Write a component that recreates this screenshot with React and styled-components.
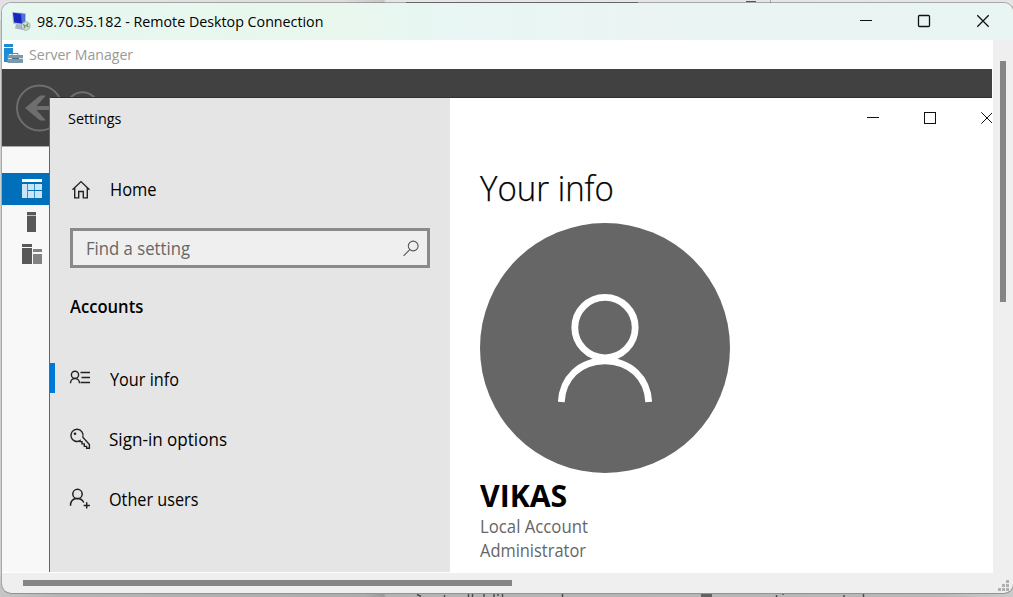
import React from "react";
import styled, { createGlobalStyle } from "styled-components";

const Global = createGlobalStyle`
  * { box-sizing: border-box; }
  html, body { margin: 0; overflow: hidden; }
  body { font-family: "Open Sans", "Noto Sans", sans-serif; color: #000; }
  svg { display: block; flex: none; overflow: visible; }
`;

const Desktop = styled.main`
  position: relative;
  width: 1013px;
  height: 597px;
  overflow: hidden;
  display: flex;
  flex-direction: column;
  justify-content: space-between;
  background: #d0d0d0;
`;
const BackdropTop = styled.div`
  height: 20px;
  background: linear-gradient(90deg, #e2e2e2 0, #dedede 340px, #c8c8c8 384px, #e5e5e5 386px);
`;
const BackdropBottom = styled.div`
  height: 20px;
  background: linear-gradient(90deg, #c6c6c6 0, #b4b4b4 60px, #adadad 365px, #999 384px, #b3b3b3 386px, #b8b8b8 940px, #cbcbcb);
`;
const RemoteWindow = styled.section`
  position: absolute;
  left: 1px;
  top: 2px;
  width: 1013px;
  height: 592px;
  display: flex;
  flex-direction: column;
  border: 1px solid #a5a9a8;
  border-top-color: rgba(70, 80, 78, 0.4);
  border-bottom-color: #939393;
  border-radius: 10px;
  overflow: hidden;
  background: #efefef;
  background-clip: padding-box;
`;
const TitleBar = styled.header`
  height: 37px;
  flex: none;
  display: flex;
  align-items: center;
  gap: 6px;
  padding: 0 24px 2px 9px;
  background: linear-gradient(90deg, #e6f7f1 0, #e9f7ed 330px, #e8f6f4 440px, #ebf4f3 650px, #e8f5f2);
`;
const Text = styled.span`
  display: block;
  white-space: nowrap;
  font-size: ${(p) => p.$size || 18.75}px;
  line-height: ${(p) => p.$line || 24}px;
  font-weight: ${(p) => p.$weight || 400};
  color: ${(p) => p.$color || "#000"};
  transform: scaleX(${(p) => p.$stretch || 0.93});
  transform-origin: 0 50%;
`;
const WindowControls = styled.div`
  margin-left: auto;
  display: flex;
  align-items: center;
  gap: ${(p) => p.$gap}px;
`;
const Body = styled.div`
  display: flex;
  height: 533px;
  flex: none;
`;
const Viewport = styled.div`
  position: relative;
  width: 991px;
  height: 533px;
  overflow: hidden;
  background: #fff;
  border: solid #fff;
  border-width: 0 1px 1px 0;
`;
const ServerTitle = styled.div`
  height: 29px;
  display: flex;
  align-items: center;
  padding: 0 0 1px 2px;
  gap: 5px;
`;
const ServerHeader = styled.div`
  height: 78px;
  background: #414141;
  border-bottom: 1px solid #aaa;
  padding: 15px 0 0 14px;
`;
const ServerRail = styled.nav`
  width: 48px;
  height: 426px;
  padding-top: 26px;
  background: #f8f8f8;
`;
const RailItem = styled.div`
  height: 32px;
  padding: 6px 0 0 20px;
  background: ${(p) => (p.$active ? "#0070bb" : "transparent")};
`;
const SettingsWindow = styled.section`
  position: absolute;
  left: 47px;
  top: 57px;
  width: 960px;
  height: 500px;
  display: flex;
  border-left: 1px solid #656565;
  border-top: 1px solid #303030;
`;
const Sidebar = styled.aside`
  width: 400px;
  background: #e5e5e5;
`;
const SettingsTitle = styled.div`
  height: 40px;
  display: flex;
  align-items: center;
  padding-left: 18px;
`;
const NavItem = styled.div`
  height: 60px;
  display: flex;
  align-items: center;
  gap: ${(p) => p.$gap || 19}px;
  padding-left: ${(p) => (p.$active ? 15 : 20)}px;
  margin-top: ${(p) => p.$top || 0}px;
`;
const ActiveMark = styled.i`
  width: 5px;
  height: 30px;
  flex: none;
  margin: -3px 0 0 -15px;
  background: #0078d7;
`;
const IconSlot = styled.div`
  width: 21px;
  height: 22px;
  flex: none;
  margin-left: ${(p) => (p.$active ? -4 : 0)}px;
`;
const SearchBox = styled.div`
  width: 360px;
  height: 40px;
  margin: 9px 0 0 20px;
  padding: 0 7px 0 13px;
  border: 3px solid #8a8a8a;
  background: #efefef;
  display: flex;
  align-items: center;
  justify-content: space-between;
`;
const GroupTitle = styled.h2`
  margin: 26px 0 31px 20px;
  height: 24px;
`;
const Content = styled.div`
  width: 560px;
  background: #fff;
`;
const ContentTitle = styled.div`
  width: 543px;
  height: 40px;
  display: flex;
  align-items: center;
`;
const Profile = styled.div`
  padding: 26px 0 0 30px;
`;
const PageTitle = styled(Text)`
  -webkit-text-stroke: 0.25px #000;
`;
const Avatar = styled.div`
  width: 250px;
  height: 250px;
  margin: 11px 0 5px;
  border-radius: 50%;
  background: #666;
  display: flex;
  justify-content: center;
  padding-top: 70px;
`;
const VerticalTrack = styled.div`
  width: 20px;
  padding: 21px 0 0 7px;
`;
const VerticalThumb = styled.div`
  width: 6px;
  height: 241px;
  background: #858585;
`;
const HorizontalTrack = styled.div`
  height: 20px;
  display: flex;
  justify-content: space-between;
  padding: 7px 4px 0 21px;
`;
const HorizontalThumb = styled.div`
  width: 489px;
  height: 6px;
  background: #858683;
`;

const MinIcon = ({ shift = 0 }) => (
  <svg width="12" height="12" fill="none" stroke="#111"><path d={`M${shift} 5.5h12`} /></svg>
);
const MaxIcon = ({ rounded }) => (
  <svg width="12" height="12" fill="none" stroke="#111" strokeWidth={rounded ? 1.3 : 1}>
    <rect x=".5" y=".5" width="11" height="11" rx={rounded ? 1 : 0} />
  </svg>
);
const CloseIcon = ({ weight = 1.3 }) => (
  <svg width="12" height="12" fill="none" stroke="#111" strokeWidth={weight}>
    <path d="M.3.3l11.4 11.4M11.7.3L.3 11.7" />
  </svg>
);
const RemoteIcon = () => (
  <svg width="20" height="20" viewBox="0 0 20 20">
    <path d="M1 .8l14 1.4v12.5L2 12.8z" fill="#b8c3d5" />
    <path d="M2 1.8l11.7 1.3v10L3 11.5z" fill="#1727bd" />
    <path d="M10 2.7l3.7.4v10L11 12.7z" fill="#5272d9" />
    <path d="M5 13l7 1v5l-8-1.5z" fill="#a9b4c6" />
    <circle cx="14.8" cy="15" r="4.3" fill="#d5d9d8" stroke="#9aa3a2" strokeWidth=".8" />
    <path d="M12.2 13.5l2 1.5-1.2 2.3M17 12.5l-1.5 2.1 2 1.5" fill="none" stroke="#4da34d" strokeWidth="1.2" />
  </svg>
);
const ServerIcon = () => (
  <svg width="20" height="20" viewBox="0 0 20 20">
    <path d="M0 0h9v3H0zM0 4h9v6H5v8H0z" fill="#1d8cd3" />
    <path d="M8 11v-1.5h6V11" fill="none" stroke="#6d8798" />
    <rect x="3.5" y="11" width="15.5" height="8" fill="#7b98ac" />
    <path d="M4 14.5h4m7 0h4" stroke="#d6e2e9" />
    <path d="M8 14.5h7" stroke="#4f6d80" />
  </svg>
);
const BackIcons = () => (
  <svg width="90" height="48" fill="none" stroke="#6e6e6e" strokeWidth="2">
    <circle cx="23.5" cy="24" r="22.5" />
    <circle cx="66.5" cy="24" r="15.8" />
    <path d="M24 11.5h6L20.5 22H46v4H20.5L30 36.5h-6L9 24z" fill="#6e6e6e" stroke="none" />
  </svg>
);
const DashboardIcon = () => (
  <svg width="20" height="20">
    <path d="M0 0h20v3H0z" fill="#fff" />
    <path d="M0 5h5.3v14H0zM6 5h6.3v6H6zM13 5h7v6h-7zM6 12h6.3v7H6zM13 12h7v7h-7z" fill="#cce5f6" />
  </svg>
);
const LocalServerIcon = () => (
  <svg width="20" height="20"><path d="M5 1h9v3H5z" fill="#585858" /><path d="M5 4h9v1H5z" fill="#c0c0c0" /><path d="M5 5h9v16H5z" fill="#585858" /></svg>
);
const AllServersIcon = () => (
  <svg width="20" height="20">
    <path d="M0 1h10v3H0zM0 5h10v16H0z" fill="#585858" />
    <path d="M11 6h9v3h-9zM11 11h9v10h-9z" fill="#828282" />
  </svg>
);
const HomeIcon = () => (
  <svg width="21" height="22" fill="none" stroke="#222" strokeWidth="1.4">
    <path d="M2.5 11.8L11 3.6l8.5 8.2M4.7 10v9.9h4v-6.4h4.6v6.4h4V10" />
  </svg>
);
const IdIcon = () => (
  <svg width="21" height="22" fill="none" stroke="#222" strokeWidth="1.4">
    <circle cx="5" cy="6.8" r="3.6" />
    <path d="M.5 15.3c0-6.5 9-6.5 9 0M10.5 4.5H20M11.5 9.5H20M10.5 14.5H20" />
  </svg>
);
const KeyIcon = () => (
  <svg width="21" height="22" fill="none" stroke="#222" strokeWidth="1.4">
    <path d="M10.1 12.6A6.1 6.1 0 1 1 12.8 9.2L19.4 16.5V20.3H16.6V18.4H14.3V15.9H12V13.6H10.1z" />
    <circle cx="5" cy="5.8" r="1.3" fill="#222" stroke="none" />
  </svg>
);
const AddUserIcon = () => (
  <svg width="21" height="22" fill="none" stroke="#222" strokeWidth="1.5">
    <circle cx="7.5" cy="6" r="4.7" />
    <path d="M.5 17.8c0-9 10.4-9.1 13.3-3.3M16.7 14.3v6.1M13.6 17.4h6.3" />
  </svg>
);
const SearchIcon = () => (
  <svg width="17" height="17" fill="none" stroke="#555" strokeWidth="1.1">
    <circle cx="10.2" cy="6" r="4.9" /><path d="M6.8 9.6L.6 15.8" />
  </svg>
);
const PersonIcon = () => (
  <svg width="96" height="112" fill="none" stroke="#fff" strokeWidth="6.8">
    <circle cx="48" cy="34.6" r="30.2" />
    <path d="M4.3 109C5.5 85 23 67.8 48 67.8S90.5 85 91.7 109" />
  </svg>
);
const Grip = () => (
  <svg width="11" height="11" fill="#b0b0b0">
    <path d="M8 0h3v3H8zM4 4h3v3H4zM8 4h3v3H8zM0 8h3v3H0zM4 8h3v3H4zM8 8h3v3H8z" />
  </svg>
);

export default function App() {
  return (
    <Desktop>
      <Global />
      <BackdropTop>
        <svg width="1013" height="3"><path d="M406 2.5h232" stroke="#777" /><path d="M746 1.5h10" stroke="#555" /><path d="M770.5 0v3" stroke="#aaa" /></svg>
      </BackdropTop>
      <BackdropBottom>
        <svg width="1013" height="20">
          <path d="M417 17.5l4 2M444.5 18v2M468.5 17v3M472.5 17v3M484 17v3M494 17v3M498 17v2M502.5 17v3M562.5 17v3M776.5 18v2M783 17v1M844 18v2M863.5 17v3" stroke="#484848" strokeWidth="1.4" fill="none" />
          <path d="M701 16h11v4h-11z" fill="#626262" />
        </svg>
      </BackdropBottom>
      <RemoteWindow>
        <TitleBar>
          <RemoteIcon />
          <Text $size={15} $stretch={0.95}>98.70.35.182 - Remote Desktop Connection</Text>
          <WindowControls $gap={47}><MinIcon shift={1} /><MaxIcon rounded /><CloseIcon /></WindowControls>
        </TitleBar>
        <Body>
          <Viewport>
            <ServerTitle><ServerIcon /><Text $size={15} $color="#999" $stretch={0.94}>Server Manager</Text></ServerTitle>
            <ServerHeader><BackIcons /></ServerHeader>
            <ServerRail>
              <RailItem $active><DashboardIcon /></RailItem>
              <RailItem><LocalServerIcon /></RailItem>
              <RailItem><AllServersIcon /></RailItem>
            </ServerRail>
            <SettingsWindow>
              <Sidebar>
                <SettingsTitle><Text $size={15} $stretch={0.96}>Settings</Text></SettingsTitle>
                <NavItem $top={21}><IconSlot><HomeIcon /></IconSlot><Text $stretch={0.88}>Home</Text></NavItem>
                <SearchBox><Text $color="#666" $stretch={0.89}>Find a setting</Text><SearchIcon /></SearchBox>
                <GroupTitle><Text $weight={600} $stretch={0.885}>Accounts</Text></GroupTitle>
                <NavItem $active><ActiveMark /><IconSlot $active><IdIcon /></IconSlot><Text $stretch={0.867}>Your info</Text></NavItem>
                <NavItem $gap={18}><IconSlot><KeyIcon /></IconSlot><Text $stretch={0.91}>Sign-in options</Text></NavItem>
                <NavItem $gap={18}><IconSlot><AddUserIcon /></IconSlot><Text $stretch={0.865}>Other users</Text></NavItem>
              </Sidebar>
              <Content>
                <ContentTitle><WindowControls $gap={45}><MinIcon /><MaxIcon /><CloseIcon weight={1} /></WindowControls></ContentTitle>
                <Profile>
                  <PageTitle $size={35} $line={48} $weight={300} $stretch={0.943}>Your info</PageTitle>
                  <Avatar><PersonIcon /></Avatar>
                  <Text $size={29.5} $line={36} $weight={700} $stretch={1.025}>VIKAS</Text>
                  <Text $color="#666" $stretch={0.893}>Local Account</Text>
                  <Text $color="#666" $stretch={0.876}>Administrator</Text>
                </Profile>
              </Content>
            </SettingsWindow>
          </Viewport>
          <VerticalTrack><VerticalThumb /></VerticalTrack>
        </Body>
        <HorizontalTrack><HorizontalThumb /><Grip /></HorizontalTrack>
      </RemoteWindow>
    </Desktop>
  );
}
